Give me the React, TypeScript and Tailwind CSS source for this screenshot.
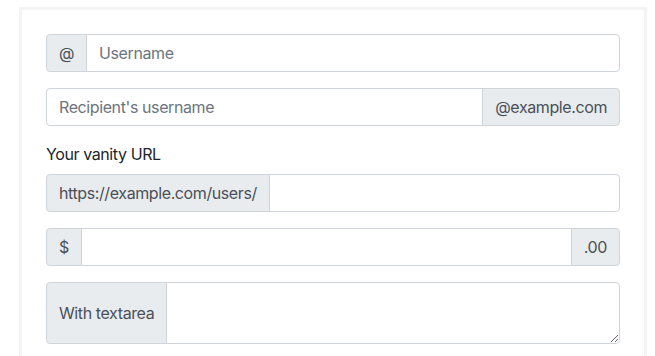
import React from "react";

const addon =
  "flex items-center px-3 bg-[#e9ecef] border border-[#ced4da] text-[#495057] text-base leading-6 whitespace-nowrap";
const field =
  "flex-1 min-w-0 h-[38px] px-3 py-[6px] bg-white border border-[#ced4da] text-[#495057] text-base leading-6 tracking-[-0.4px] outline-none placeholder:text-[#6c757d]";

const App = () => {
  return (
    <div className="w-[655px] h-[356px] overflow-hidden bg-white tracking-[-0.4px] font-['Inter','Liberation_Sans',Arial,sans-serif]">
      <div className="ml-[19px] mt-[7px] w-[628px] border-[3px] border-[#f3f4f5] p-6">
        <div className="flex mb-4">
          <span className={`${addon} rounded-l`}>@</span>
          <input className={`${field} -ml-px rounded-r`} placeholder="Username" />
        </div>

        <div className="flex mb-4">
          <input className={`${field} rounded-l`} placeholder="Recipient's username" />
          <span className={`${addon} -ml-px rounded-r`}>@example.com</span>
        </div>

        <label className="block mb-2 text-base leading-6 text-[#212529]">Your vanity URL</label>
        <div className="flex mb-4">
          <span className={`${addon} rounded-l`}>https://example.com/users/</span>
          <input className={`${field} -ml-px rounded-r`} />
        </div>

        <div className="flex mb-4">
          <span className={`${addon} rounded-l`}>$</span>
          <input className={`${field} -ml-px`} />
          <span className={`${addon} -ml-px rounded-r`}>.00</span>
        </div>

        <div className="flex">
          <span className={`${addon} rounded-l`}>With textarea</span>
          <textarea
            rows={2}
            className="flex-1 min-w-0 h-[62px] -ml-px px-3 py-[6px] bg-white border border-[#ced4da] rounded-r text-[#495057] text-base leading-6 outline-none"
          />
        </div>
      </div>
    </div>
  );
};

export default App;
